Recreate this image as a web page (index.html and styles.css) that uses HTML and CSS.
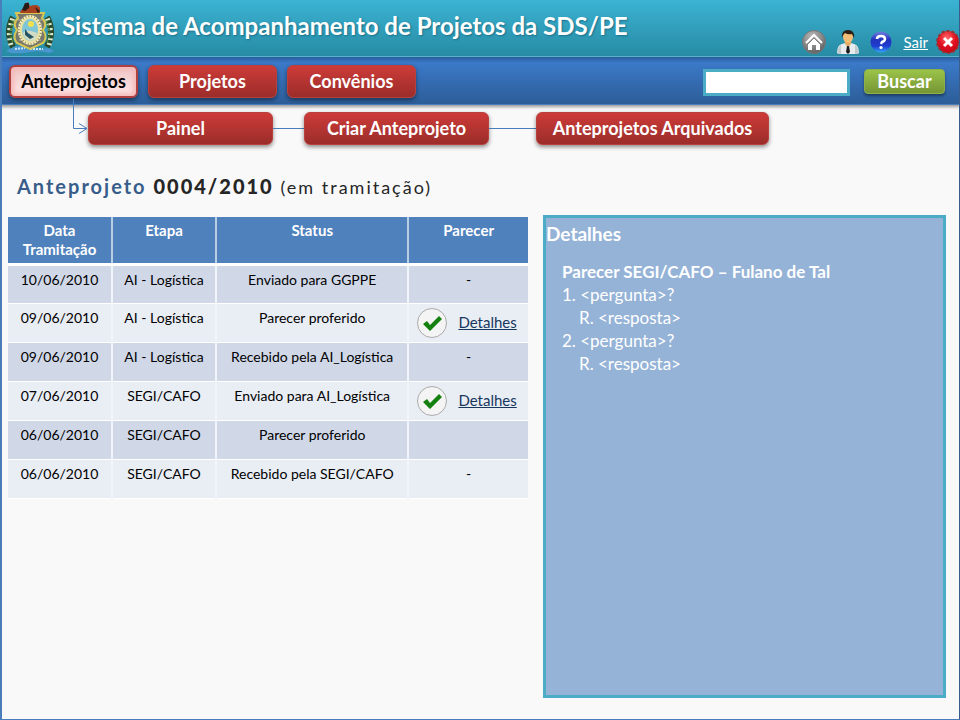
FILE: index.html
```html
<!DOCTYPE html>
<html lang="pt-BR">
<head>
<meta charset="utf-8">
<title>Sistema de Acompanhamento de Projetos da SDS/PE</title>
<link rel="stylesheet" href="styles.css">
</head>
<body>
<header class="topbar">
  <svg class="crest" viewBox="0 0 50 52" aria-hidden="true">
    <path d="M6 46Q15 42 25 45T44 46L49 49 44 51Q34 48 25 50T6 51L1 49Z" fill="#4a96cf"/>
    <path d="M10 47L20 46M25 47L38 47" stroke="#c8e7f4" stroke-width="2" stroke-dasharray="2 1"/>
    <path d="M8 45Q0 30 8 15M42 45Q50 30 42 15" fill="none" stroke="#284a2d" stroke-width="6"/>
    <path d="M6 43Q2 30 8 16M44 43Q48 30 42 16" fill="none" stroke="#dce8cf" stroke-width="5" stroke-dasharray="2 3"/>
    <path d="M8 40Q3 30 9 19M42 40Q47 30 41 19" fill="none" stroke="#4e8a3c" stroke-width="2" stroke-dasharray="2 2"/>
    <path d="M11 11H39L37 16Q43 22 38 28 43 35 38 41L25 47 12 41Q7 35 12 28 7 22 13 16Z" fill="#77776c" stroke="#d8c653" stroke-width="2"/>
    <path d="M13 18H37M13 22H37M13 33H37M14 38H36" stroke="#b9b8a4"/>
    <ellipse cx="25" cy="28" rx="11" ry="14" fill="#e8dfa0" stroke="#f3efce" stroke-width="2"/>
    <ellipse cx="25" cy="28" rx="11" ry="14" fill="none" stroke="#9a8b3b" stroke-width="2" stroke-dasharray="1 2"/>
    <ellipse cx="25" cy="28" rx="8" ry="11" fill="#7fc5d8"/>
    <path d="M18 31Q21 26 32 31Q32 39 25 39 19 37 18 31" fill="#d2dcc5"/>
    <path d="M20 27L23 31 29 35 25 37 20 33Z" fill="#265563"/>
    <circle cx="26" cy="22" r="3" fill="#f2e14a"/>
    <path d="M15 11Q16 6 21 6L20 2 23 0 25 4Q33 1 35 6L35 11Z" fill="#a8411f"/>
    <path d="M20 1L24 1 24 6 20 9 17 8ZM30 5L35 9 33 11Z" fill="#271b17"/>
  </svg>
  <h1 class="title">Sistema de Acompanhamento de Projetos da SDS/PE</h1>
  <div class="tools">
    <a class="tool" href="#" aria-label="Início">
      <svg width="24" height="24" viewBox="0 0 24 24">
        <defs><radialGradient id="gray" cx=".4" cy=".25" r=".8"><stop offset="0" stop-color="#b5b5b5"/><stop offset=".6" stop-color="#858585"/><stop offset="1" stop-color="#5a5a5a"/></radialGradient></defs>
        <circle cx="12" cy="12" r="11.500" fill="url(#gray)" stroke="#777"/>
        <path d="M4 13L12 5 20 13" fill="none" stroke="#fff" stroke-width="2"/>
        <path d="M6 14L12 8 18 14V20H14V15H10V20H6Z" fill="#fff"/>
        <path d="M5 15L12 8 19 15" fill="none" stroke="#808080"/>
      </svg>
    </a>
    <a class="tool" href="#" aria-label="Usuário">
      <svg width="22" height="26" viewBox="0 0 22 26">
        <path d="M0 24Q0 16 5 15L11 13 17 15Q22 16 22 24L20 25H2Z" fill="#e8ebed"/>
        <path d="M1 25Q0 18 4 16V25M21 25Q22 18 18 16V25" fill="#c2c9cd"/>
        <path d="M8 12H14V15L11 18 8 15Z" fill="#e3a862"/>
        <path d="M10 17H12L13 23 11 25 9 23Z" fill="#1c1d20"/>
        <ellipse cx="11" cy="8" rx="5" ry="6" fill="#f3bd75"/>
        <path d="M5 9Q4 1 11 1T17 9L15 5Q11 6 8 4L6 6Z" fill="#2c2015"/>
      </svg>
    </a>
    <a class="tool" href="#" aria-label="Ajuda">
      <svg width="22" height="22" viewBox="0 0 22 22">
        <defs><linearGradient id="blue" x2="0" y2="1"><stop offset="0" stop-color="#6f7fe0"/><stop offset=".4" stop-color="#2233bd"/><stop offset=".7" stop-color="#1f3ed0"/><stop offset="1" stop-color="#35a5f5"/></linearGradient></defs>
        <circle cx="11" cy="11" r="10.500" fill="url(#blue)"/>
        <path d="M7 8Q7 5 11 5T15 8Q15 10 12 11L11 13" fill="none" stroke="#fff" stroke-width="2.500"/>
        <circle cx="11" cy="16.500" r="1.600" fill="#fff"/>
      </svg>
    </a>
    <a class="exit" href="#">Sair</a>
    <a class="tool" href="#" aria-label="Fechar">
      <svg width="24" height="24" viewBox="0 0 24 24">
        <defs><radialGradient id="red" cx=".45" cy=".3" r=".8"><stop offset="0" stop-color="#f66"/><stop offset=".5" stop-color="#e01020"/><stop offset="1" stop-color="#c00010"/></radialGradient></defs>
        <circle cx="12" cy="12" r="11" fill="url(#red)" stroke="#8e3a3a" stroke-width="2" stroke-dasharray="3 2"/>
        <path d="M8 8L16 16M16 8L8 16" stroke="#fff" stroke-width="3"/>
      </svg>
    </a>
  </div>
</header>
<nav class="mainnav" aria-label="Principal">
  <button class="btn tab active">Anteprojetos</button>
  <button class="btn tab">Projetos</button>
  <button class="btn tab">Convênios</button>
  <form class="search">
    <input class="field" type="text" aria-label="Buscar">
    <button class="go" type="button">Buscar</button>
  </form>
  <svg class="arrow" width="18" height="40" viewBox="0 0 18 40" aria-hidden="true">
    <path d="M1.500 1V30.500H15M7 25.500L15 30.500 7 35.500" fill="none" stroke="#4a7ebb"/>
  </svg>
</nav>
<nav class="subnav" aria-label="Anteprojetos">
  <button class="btn">Painel</button>
  <span class="link-line"></span>
  <button class="btn">Criar Anteprojeto</button>
  <span class="link-line long"></span>
  <button class="btn wide">Anteprojetos Arquivados</button>
</nav>
<main class="page">
  <h2 class="heading"><span class="kind">Anteprojeto</span> <b>0004/2010</b> <span class="state">(em tramitação)</span></h2>
  <div class="columns">
    <table class="steps">
      <colgroup><col class="c-date"><col class="c-stage"><col class="c-status"><col class="c-opinion"></colgroup>
      <thead>
        <tr><th scope="col">Data<br>Tramitação</th><th scope="col">Etapa</th><th scope="col">Status</th><th scope="col">Parecer</th></tr>
      </thead>
      <tbody>
        <tr><td>10/06/2010</td><td>AI - Logística</td><td>Enviado para GGPPE</td><td>-</td></tr>
        <tr><td>09/06/2010</td><td>AI - Logística</td><td>Parecer proferido</td><td class="result"><div class="opinion">
          <svg width="30" height="30" viewBox="0 0 30 30" aria-hidden="true"><circle cx="15" cy="15" r="14.500" fill="#f4f4f4" stroke="#aaa"/><path d="M6 16L10 13 13 17 22 8 25 11 13 23Z" fill="#14800f"/></svg>
          <a href="#">Detalhes</a></div></td></tr>
        <tr><td>09/06/2010</td><td>AI - Logística</td><td>Recebido pela AI_Logística</td><td>-</td></tr>
        <tr><td>07/06/2010</td><td>SEGI/CAFO</td><td>Enviado para AI_Logística</td><td class="result"><div class="opinion">
          <svg width="30" height="30" viewBox="0 0 30 30" aria-hidden="true"><circle cx="15" cy="15" r="14.500" fill="#f4f4f4" stroke="#aaa"/><path d="M6 16L10 13 13 17 22 8 25 11 13 23Z" fill="#14800f"/></svg>
          <a href="#">Detalhes</a></div></td></tr>
        <tr><td>06/06/2010</td><td>SEGI/CAFO</td><td>Parecer proferido</td><td></td></tr>
        <tr><td>06/06/2010</td><td>SEGI/CAFO</td><td>Recebido pela SEGI/CAFO</td><td>-</td></tr>
      </tbody>
    </table>
    <section class="details">
      <h3>Detalhes</h3>
      <div class="qa">
        <h4>Parecer SEGI/CAFO – Fulano de Tal</h4>
        <p>1. &lt;pergunta&gt;?</p>
        <p class="answer">R. &lt;resposta&gt;</p>
        <p>2. &lt;pergunta&gt;?</p>
        <p class="answer">R. &lt;resposta&gt;</p>
      </div>
    </section>
  </div>
</main>
</body>
</html>
```
FILE: styles.css
```css
* { box-sizing: border-box; }
body {
  margin: 0;
  min-height: 100vh;
  display: flex;
  flex-direction: column;
  background: #f9f9f9;
  border-left: 2px solid #4a7ebb;
  border-right: 1px solid #385d8a;
  border-bottom: 1px solid #4a7ebb;
  font-family: Lato, "Liberation Sans", sans-serif;
  font-size: 14px;
  line-height: 19px;
  color: #000;
}
h1, h2, h3, h4, p { margin: 0; }
button { font-family: inherit; cursor: pointer; }

.topbar {
  display: flex;
  align-items: center;
  height: 57px;
  margin: 0 -1px 0 -2px;
  padding-left: 5px;
  background: linear-gradient(#3bb3d3, #278ba4);
  border-bottom: 1px solid #56b5cb;
}
.crest { width: 50px; height: 52px; }
.title {
  margin-left: 7px;
  padding-bottom: 4px;
  flex: 1;
  font-size: 24px;
  line-height: 30px;
  white-space: nowrap;
  color: #fff;
  text-shadow: 1px 1px 2px #1d6f88;
}
.tools { display: flex; align-items: center; gap: 11px; align-self: flex-end; height: 28px; }
.tool { display: flex; }
.exit { margin-right: -3px; color: #fff; font-size: 15px; }

.mainnav {
  position: relative;
  display: flex;
  align-items: flex-start;
  gap: 10px;
  height: 48px;
  margin: 0 -1px 0 -2px;
  padding: 8px 15px 0 9px;
  background: linear-gradient(#2a5c9c, #3b79c8 12%, #2c5d98);
  border-bottom: 1px solid #4a7ebb;
  box-shadow: 0 2px 3px #9a9a9a;
}
.btn {
  width: 185px;
  height: 33px;
  padding: 0 0 2px;
  border: 1px solid #b8413e;
  border-radius: 6px;
  background: linear-gradient(#cd3b38, #9b2d2a);
  box-shadow: 0 2px 4px rgba(0, 0, 0, .45);
  color: #fff;
  font-size: 18px;
  line-height: 20px;
  font-weight: 700;
  white-space: nowrap;
}
.tab { width: 129px; }
.active {
  border: 2px solid #b04040;
  background: linear-gradient(#eec5c5, #ffe9e9);
  box-shadow: inset 0 0 5px 3px #f5b9b9, 0 2px 4px rgba(0, 0, 0, .45);
  color: #000;
}
.search { display: flex; gap: 14px; margin-left: auto; padding-top: 4px; }
.field {
  width: 147px;
  height: 27px;
  padding: 0 4px;
  border: 3px solid #4bacc6;
  background: #fff;
  font: inherit;
}
.go {
  width: 81px;
  height: 25px;
  padding: 0 0 2px;
  border: 1px solid #8db04a;
  border-radius: 4px;
  background: linear-gradient(#9bc348, #769535);
  box-shadow: 0 2px 3px rgba(0, 0, 0, .4);
  color: #fff;
  font-size: 18px;
  line-height: 20px;
  font-weight: 700;
}
.arrow { position: absolute; left: 72px; top: 41px; }

.subnav { display: flex; align-items: center; padding: 7px 0 0 86px; }
.wide { width: 233px; }
.link-line { width: 31px; height: 1px; background: #4a7ebb; }
.long { width: 47px; }

.page { flex: 1; display: flex; flex-direction: column; padding: 29px 13px 21px 6px; }
.heading {
  padding-left: 9px;
  font-size: 20px;
  line-height: 24px;
  letter-spacing: 2px;
  color: #262626;
}
.kind { color: #385d8a; }
.state { font-size: 18px; font-weight: 400; }

.columns { flex: 1; display: grid; grid-template-columns: 520fr 403fr; gap: 15px; margin-top: 16px; align-items: stretch; }
.steps {
  align-self: start;
  width: 100%;
  margin-top: 2px;
  table-layout: fixed;
  border-collapse: collapse;
  text-align: center;
}
.c-date, .c-stage { width: 20%; }
.c-status { width: 37%; }
.c-opinion { width: 23%; }
.steps th, .steps td { padding: 4px 0 0; vertical-align: top; white-space: nowrap; }
.steps th + th, .steps td + td { border-left: 2px solid #f1f5fb; }
.steps th + th { border-left-color: #b9cde5; }
.steps th { height: 47px; background: #4f81bd; color: #fff; font-size: 15px; }
.steps td { height: 39px; border-bottom: 1px solid #fff; background: #e9edf4; }
.steps tbody tr:nth-child(odd) td { background: #d0d8e8; }
.steps tbody tr:first-child td { border-top: 3px solid #fff; }
.steps .result { padding: 4px 0; }
.opinion { display: flex; align-items: center; gap: 11px; padding-left: 8px; }
.opinion a { color: #17375e; font-size: 15px; }

.details {
  border: 3px solid #4bacc6;
  background: #95b3d7;
  color: #fff;
  font-size: 17px;
  line-height: 23px;
}
.details h3 { padding-top: 4px; font-size: 19px; line-height: 24px; }
.qa { padding: 14px 16px; }
.qa h4 { font-size: 17px; line-height: 23px; }
.answer { padding-left: 17px; }
```
